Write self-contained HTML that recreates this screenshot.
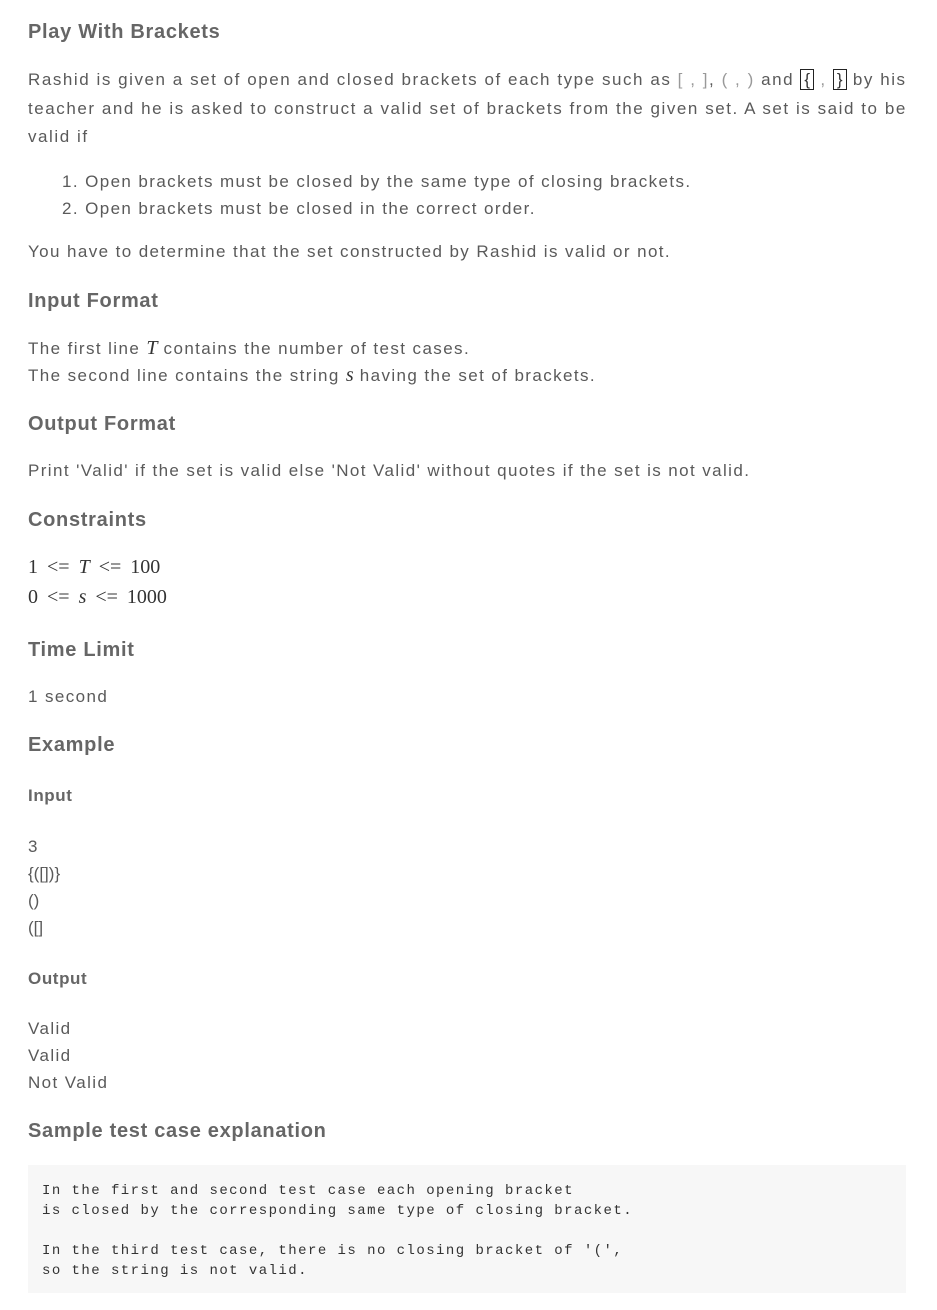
<!DOCTYPE html>
<html><head><meta charset="utf-8"><style>
body{margin:0;background:#fff;width:937px;height:1310px;position:relative;font-family:"Liberation Sans",sans-serif;color:#5a5a5a;}
.t{position:absolute;left:28px;white-space:nowrap;font-size:17px;line-height:20px;letter-spacing:1.4px}
.w{letter-spacing:1.55px}
.h{font-weight:bold;font-size:20px;color:#666;letter-spacing:0.7px}
.h2{font-weight:bold;font-size:17px;color:#666;letter-spacing:0.6px}
.m{font-family:"Liberation Serif",serif;font-size:20px;color:#333;letter-spacing:0}
.op{margin:0 9px}
.b{border:1px solid #222;padding:0 3px;color:#333;letter-spacing:0}
.g{color:#999}
pre{position:absolute;left:28px;top:1165px;width:878px;height:128px;margin:0;background:#f7f7f7;box-sizing:border-box;padding:16px 14px;font-family:"Liberation Mono",monospace;font-size:14px;line-height:20px;color:#333;letter-spacing:1.45px}
</style></head><body>
<div class="t h" style="top:22px">Play With Brackets</div>
<div class="t w" style="top:70px">Rashid is given a set of open and closed brackets of each type such as <span class="g">[ , ]</span>, <span class="g">( , )</span> and <span class="b">{</span> <span class="g">,</span> <span class="b">}</span> by his</div>
<div class="t w" style="top:99px">teacher and he is asked to construct a valid set of brackets from the given set. A set is said to be</div>
<div class="t w" style="top:127px">valid if</div>
<div class="t" style="top:172px;left:62px">1. Open brackets must be closed by the same type of closing brackets.</div>
<div class="t" style="top:199px;left:62px">2. Open brackets must be closed in the correct order.</div>
<div class="t" style="top:242px">You have to determine that the set constructed by Rashid is valid or not.</div>
<div class="t h" style="top:291px">Input Format</div>
<div class="t" style="top:338px">The first line <i class="m">T</i> contains the number of test cases.</div>
<div class="t" style="top:365px">The second line contains the string <i class="m">s</i> having the set of brackets.</div>
<div class="t h" style="top:414px">Output Format</div>
<div class="t" style="top:461px">Print 'Valid' if the set is valid else 'Not Valid' without quotes if the set is not valid.</div>
<div class="t h" style="top:510px">Constraints</div>
<div class="t m" style="top:557px">1<span class="op">&lt;=</span><i>T</i><span class="op">&lt;=</span>100</div>
<div class="t m" style="top:587px">0<span class="op">&lt;=</span><i>s</i><span class="op">&lt;=</span>1000</div>
<div class="t h" style="top:640px">Time Limit</div>
<div class="t" style="top:687px">1 second</div>
<div class="t h" style="top:735px">Example</div>
<div class="t h2" style="top:786px">Input</div>
<div class="t" style="top:837px">3</div>
<div class="t" style="top:864px;letter-spacing:0">{([])}</div>
<div class="t" style="top:891px;letter-spacing:0">()</div>
<div class="t" style="top:918px;letter-spacing:0">([]</div>
<div class="t h2" style="top:969px">Output</div>
<div class="t" style="top:1019px">Valid</div>
<div class="t" style="top:1046px">Valid</div>
<div class="t" style="top:1073px">Not Valid</div>
<div class="t h" style="top:1121px">Sample test case explanation</div>
<pre>In the first and second test case each opening bracket
is closed by the corresponding same type of closing bracket.

In the third test case, there is no closing bracket of '(',
so the string is not valid.</pre>
</body></html>
